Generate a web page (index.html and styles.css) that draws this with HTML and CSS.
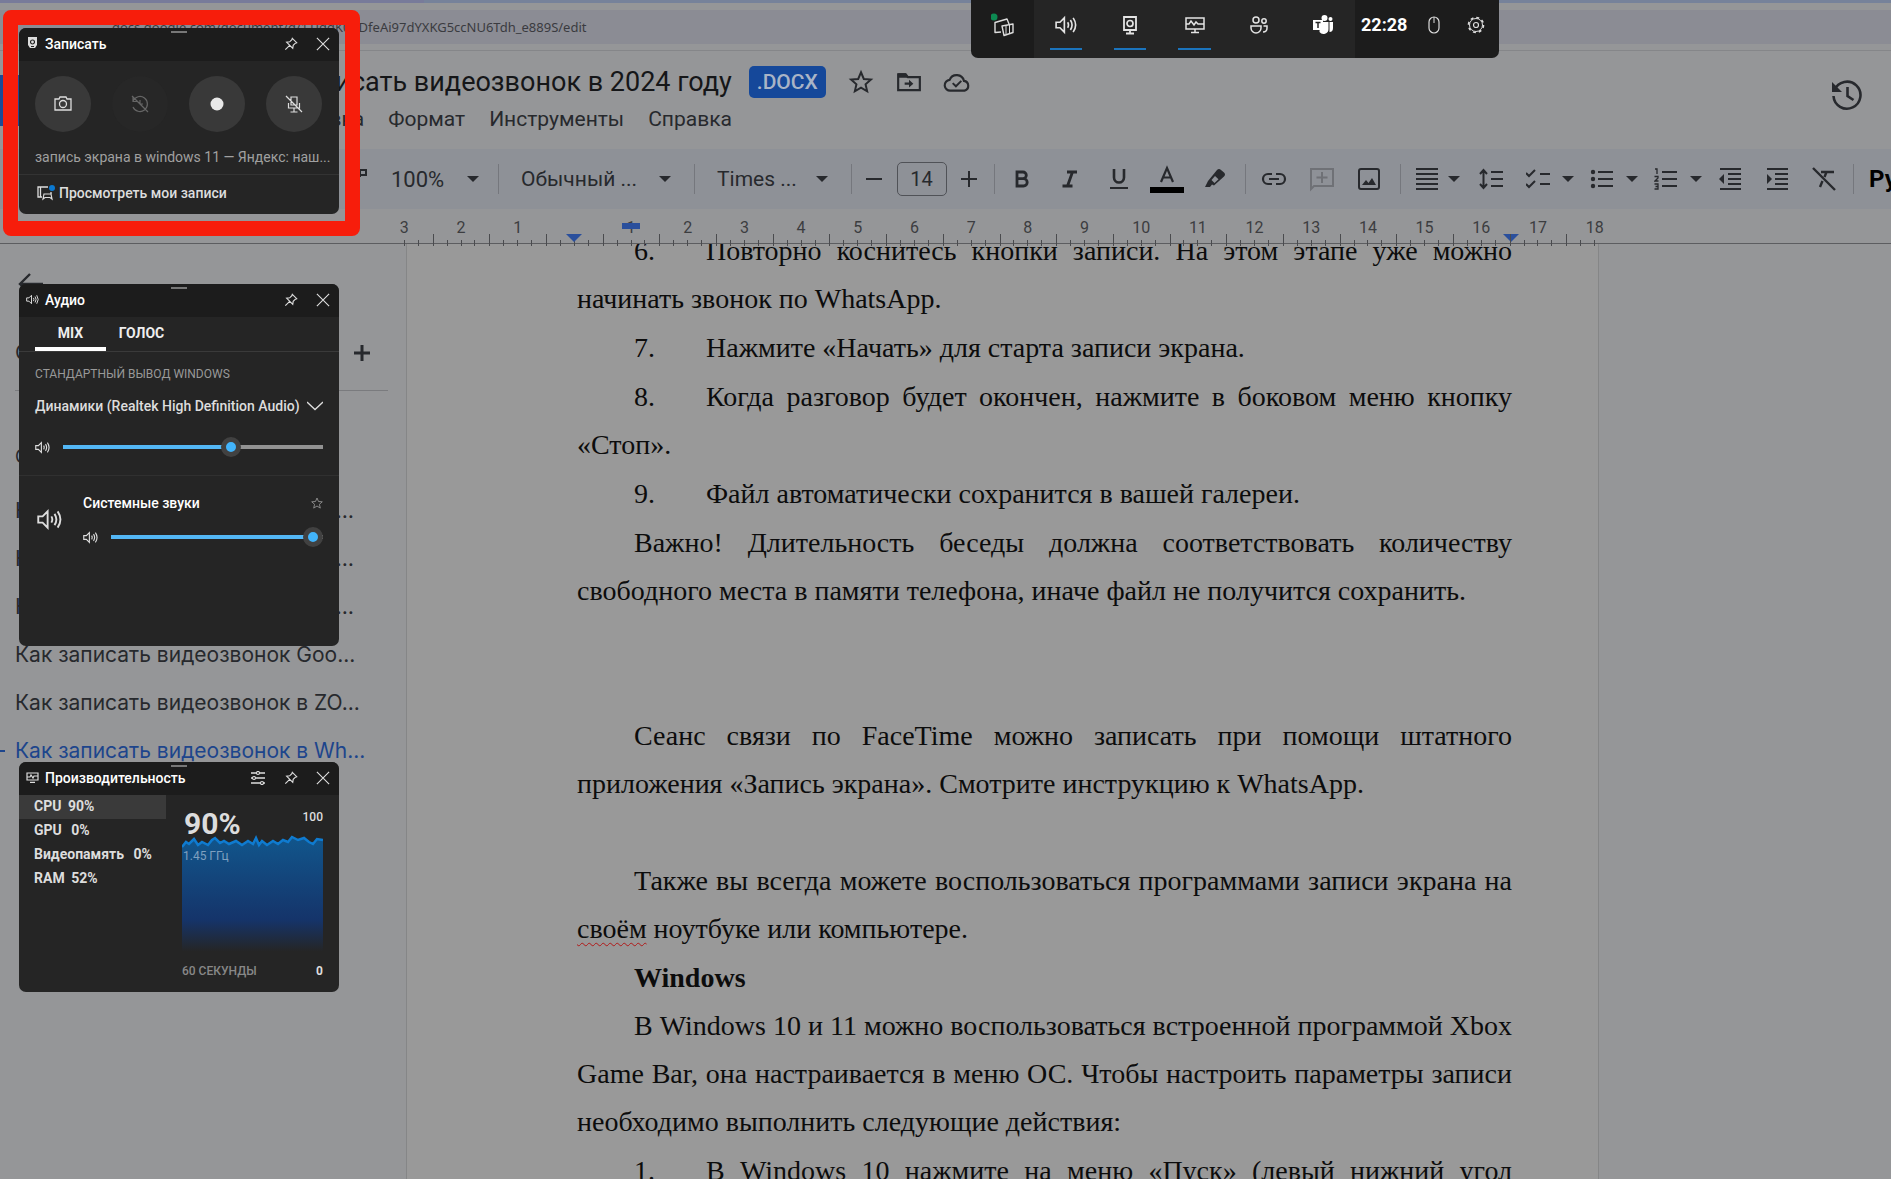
FILE: index.html
```html
<!DOCTYPE html>
<html lang="ru">
<head>
<meta charset="utf-8">
<title>Как записать видеозвонок в 2024 году</title>
<link rel="stylesheet" href="styles.css">
</head>
<body>
<svg class="defs" aria-hidden="true">
  <symbol id="speaker" viewBox="0 0 20 20"><path d="M1 7.500h3.500l4-4v13l-4-4H1zM11.500 7.500q1.500 2.500 0 5M14 5.500q3 4.500 0 9M16.500 3.500q4.500 6.500 0 13" fill="none" stroke="currentColor" stroke-width="1.500"/></symbol>
  <symbol id="pin" viewBox="0 0 16 16"><path d="M9.500 1.500l5 5-1.500.5-2.500 2.500-.5 3.500L3 6l3.500-.5L9 3zM6.500 9.500L1.500 14.500" fill="none" stroke="currentColor" stroke-width="1.300"/></symbol>
  <symbol id="close" viewBox="0 0 16 16"><path d="M1 1l14 14M15 1L1 15" stroke="currentColor" stroke-width="1.300"/></symbol>
</svg>

<header class="browser">
  <div class="tabs"><span class="tab"></span></div>
  <div class="address">docs.google.com/document/d/1TJggK0RDfeAi97dYXKG5ccNU6Tdh_e889S/edit</div>
</header>

<section class="head">
  <span class="logo"></span>
  <div class="head-main">
    <div class="title-row">
      <h1>Как записать видеозвонок в 2024 году</h1>
      <span class="badge">.DOCX</span>
      <button aria-label="Пометить"><svg width="26" height="26" viewBox="0 0 24 24"><path d="M12 3l2.600 6.200 6.600.5-5 4.400 1.500 6.500L12 17.200l-5.700 3.400 1.500-6.500-5-4.400 6.600-.5z" fill="none" stroke="currentColor" stroke-width="1.800"/></svg></button>
      <button aria-label="Переместить"><svg width="26" height="26" viewBox="0 0 24 24"><path d="M2 5h7l2 2.500h11v12H2z" fill="none" stroke="currentColor" stroke-width="2"/><path d="M2 4h7l2 4H2zM12 10l4 3.500-4 3.500v-2.500H8v-2h4z" fill="currentColor"/></svg></button>
      <button aria-label="Статус документа"><svg width="28" height="26" viewBox="0 0 26 24"><path d="M7 20a5 5 0 0 1-.8-10A7 7 0 0 1 19.500 11 4.600 4.600 0 0 1 20 20z" fill="none" stroke="currentColor" stroke-width="2"/><path d="M9 13l3 3 5-5" fill="none" stroke="currentColor" stroke-width="1.800"/></svg></button>
    </div>
    <nav class="menu"><a href="#">Вставка</a><a href="#">Формат</a><a href="#">Инструменты</a><a href="#">Справка</a></nav>
  </div>
  <button class="history" aria-label="История"><svg width="32" height="32" viewBox="0 0 32 32"><path d="M3.500 11A13.500 13.500 0 1 1 2.500 17M16.500 8v9l6 4" fill="none" stroke="currentColor" stroke-width="2.600"/><path d="M1 3v10h10l-3.500-3.500L4 6z" fill="currentColor"/></svg></button>
</section>

<div class="toolbar">
  <button class="paint" aria-label="Форматирование"><svg width="24" height="24" viewBox="0 0 24 24"><path d="M4 3h12v6H4zM16 3h6v5h-11v8" fill="none" stroke="currentColor" stroke-width="2"/></svg></button>
  <button class="drop zoom">100%<i class="caret"></i></button><i class="sep"></i>
  <button class="drop style">Обычный ...<i class="caret"></i></button><i class="sep"></i>
  <button class="drop font">Times ...<i class="caret"></i></button><i class="sep"></i>
  <div class="size">
    <button aria-label="Меньше"><svg width="18" height="18" viewBox="0 0 18 18"><path d="M1 9h16" stroke="currentColor" stroke-width="2"/></svg></button>
    <input value="14" aria-label="Размер шрифта">
    <button aria-label="Больше"><svg width="18" height="18" viewBox="0 0 18 18"><path d="M1 9h16M9 1v16" stroke="currentColor" stroke-width="2"/></svg></button>
  </div><i class="sep"></i>
  <div class="group text">
    <button aria-label="Полужирный"><svg width="24" height="24" viewBox="0 0 24 24"><path d="M7 5h6a3.300 3.300 0 0 1 0 6.600H7zM7 11.600h6.500a3.700 3.700 0 0 1 0 7.400H7z" fill="none" stroke="currentColor" stroke-width="2.800"/></svg></button>
    <button aria-label="Курсив"><svg width="24" height="24" viewBox="0 0 24 24"><path d="M9 5h10M4.500 19h10M14.500 5l-5 14" fill="none" stroke="currentColor" stroke-width="2.800"/></svg></button>
    <button aria-label="Подчеркнутый"><svg width="24" height="24" viewBox="0 0 24 24"><path d="M7 2v8.500a5 5 0 0 0 10 0V2" fill="none" stroke="currentColor" stroke-width="2.600"/><path d="M3 21h18" stroke="currentColor" stroke-width="2"/></svg></button>
    <button aria-label="Цвет текста"><svg width="34" height="28" viewBox="0 0 34 28"><path d="M11 17l6-14 6 14M13 12.500h8" fill="none" stroke="currentColor" stroke-width="2.200"/><path d="M0 22h34v6H0z" fill="#000"/></svg></button>
    <button class="marker" aria-label="Цвет выделения"><svg width="24" height="24" viewBox="0 0 24 24"><path d="M2 20l3-6 9-11q2-2 4 0l3 2.500q2 2 0 4l-10 9-2-1-2 2.500zM8.500 13l3 3 4-3.800-3.500-3.200z" fill="currentColor" fill-rule="evenodd"/></svg></button>
  </div><i class="sep"></i>
  <div class="group insert">
    <button aria-label="Ссылка"><svg width="26" height="24" viewBox="0 0 26 24"><path d="M11 7H7a5 5 0 0 0 0 10h4M15 7h4a5 5 0 0 1 0 10h-4M8 12h10" fill="none" stroke="currentColor" stroke-width="2.200"/></svg></button>
    <button class="off" aria-label="Комментарий"><svg width="26" height="26" viewBox="0 0 26 26"><path d="M2 23V3h22v17H5zM13 6v11M7.500 11.500h11" fill="none" stroke="currentColor" stroke-width="2"/></svg></button>
    <button aria-label="Изображение"><svg width="24" height="24" viewBox="0 0 24 24"><rect x="2" y="2" width="20" height="20" rx="2" fill="none" stroke="currentColor" stroke-width="2"/><path d="M5 18l4-5 2.500 3 3.500-5 4 7z" fill="currentColor"/></svg></button>
  </div><i class="sep"></i>
  <div class="group para">
    <button class="pair" aria-label="Выравнивание"><svg width="24" height="24" viewBox="0 0 24 24"><path d="M1 2h22M1 7h22M1 12h22M1 17h22M1 22h22" stroke="currentColor" stroke-width="2"/></svg><i class="caret"></i></button>
    <button class="lone" aria-label="Интервал"><svg width="24" height="24" viewBox="0 0 24 24"><path d="M12 5h12M12 12h12M12 19h12M4.500 4v16M1 7l3.500-4L8 7M1 17l3.500 4L8 17" fill="none" stroke="currentColor" stroke-width="2"/></svg></button>
    <button class="pair" aria-label="Контрольный список"><svg width="24" height="24" viewBox="0 0 24 24"><path d="M14 7h10M14 17h10M0 6l3 3 6-6M0 17l3 3 6-6" fill="none" stroke="currentColor" stroke-width="2"/></svg><i class="caret"></i></button>
    <button class="pair" aria-label="Маркированный список"><svg width="24" height="24" viewBox="0 0 24 24"><path d="M8 5h15M8 12h15M8 19h15" stroke="currentColor" stroke-width="2"/><g fill="currentColor"><circle cx="3" cy="5" r="2.200"/><circle cx="3" cy="12" r="2.200"/><circle cx="3" cy="19" r="2.200"/></g></svg><i class="caret"></i></button>
    <button class="pair" aria-label="Нумерованный список"><svg width="24" height="24" viewBox="0 0 24 24"><path d="M8 5h15M8 12h15M8 19h15" stroke="currentColor" stroke-width="2"/><path d="M1 2h2v5M.5 9.500h3.500v1.500l-3 3h3.500M.5 17H4v5H.5M1.500 19.500H4" fill="none" stroke="currentColor" stroke-width="1.300"/></svg><i class="caret"></i></button>
    <button class="lone" aria-label="Уменьшить отступ"><svg width="24" height="24" viewBox="0 0 24 24"><path d="M2 2h21M10 7h13M10 12h13M10 17h13M2 22h21" stroke="currentColor" stroke-width="2"/><path d="M6 7v10l-5-5z" fill="currentColor"/></svg></button>
    <button class="lone" aria-label="Увеличить отступ"><svg width="24" height="24" viewBox="0 0 24 24"><path d="M2 2h21M10 7h13M10 12h13M10 17h13M2 22h21" stroke="currentColor" stroke-width="2"/><path d="M2 7v10l5-5z" fill="currentColor"/></svg></button>
    <button aria-label="Очистить"><svg width="24" height="24" viewBox="0 0 24 24"><path d="M1 1l22 22M9 5h13M14.500 5l-2 5M10.500 14l-2.500 6" fill="none" stroke="currentColor" stroke-width="2.400"/></svg></button>
  </div><i class="sep"></i>
  <button class="lang">Ру</button>
</div>

<div class="ruler"><div class="scale">
  <span>3</span><span>2</span><span>1</span><span class="mark"></span><span class="first">1</span><span>2</span><span>3</span><span>4</span><span>5</span><span>6</span><span>7</span><span>8</span><span>9</span><span>10</span><span>11</span><span>12</span><span>13</span><span>14</span><span>15</span><span class="end">16</span><span>17</span><span>18</span>
</div></div>

<main class="work">
  <aside class="outline">
    <button class="back" aria-label="Назад"><svg width="26" height="24" viewBox="0 0 26 24"><path d="M26 12H3M13 2L3 12l10 10" fill="none" stroke="currentColor" stroke-width="2.400"/></svg></button>
    <div class="summary"><span>Сводка</span><button aria-label="Добавить"><svg width="16" height="16" viewBox="0 0 16 16"><path d="M0 8h16M8 0v16" stroke="currentColor" stroke-width="3"/></svg></button></div>
    <h2>Структура</h2>
    <nav>
      <a class="clip" href="#">Как записать видеозвонок на телефоне и компьютере</a>
      <a class="clip" href="#">Как записать видеозвонок на телефоне и компьютере</a>
      <a class="clip" href="#">Как записать видеозвонок на телефоне и компьютере</a>
      <a href="#">Как записать видеозвонок Goo...</a>
      <a href="#">Как записать видеозвонок в ZO...</a>
      <a class="current" href="#">Как записать видеозвонок в Wh...</a>
    </nav>
  </aside>
  <article class="page">
    <p class="item"><b>6.</b>Повторно коснитесь кнопки записи. На этом этапе уже можно начинать звонок по WhatsApp.</p>
    <p class="item"><b>7.</b>Нажмите «Начать» для старта записи экрана.</p>
    <p class="item"><b>8.</b>Когда разговор будет окончен, нажмите в боковом меню кнопку «Стоп».</p>
    <p class="item"><b>9.</b>Файл автоматически сохранится в вашей галереи.</p>
    <p>Важно! Длительность беседы должна соответствовать количеству свободного места в памяти телефона, иначе файл не получится сохранить.</p>
    <p class="empty two"></p>
    <p>Сеанс связи по FaceTime можно записать при помощи штатного приложения «Запись экрана». Смотрите инструкцию к WhatsApp.</p>
    <p class="empty"></p>
    <p>Также вы всегда можете воспользоваться программами записи экрана на <u>своём</u> ноутбуке или компьютере.</p>
    <h3>Windows</h3>
    <p>В Windows 10 и 11 можно воспользоваться встроенной программой Xbox Game Bar, она настраивается в меню ОС. Чтобы настроить параметры записи необходимо выполнить следующие действия:</p>
    <p class="item"><b>1.</b>В Windows 10 нажмите на меню «Пуск» (левый нижний угол экрана)</p>
  </article>
</main>

<div class="frame"></div>

<section class="widget capture">
  <header><svg width="13" height="13" viewBox="-1 0 13 13"><path d="M1 0h9v8l-2 3H3L1 8z" fill="#ddd"/><circle cx="5.500" cy="5" r="2" fill="none" stroke="#222" stroke-width="1.200"/><path d="M4 9.500h3" stroke="#222"/></svg><h2>Записать</h2>
    <button aria-label="Закрепить"><svg width="14" height="14"><use href="#pin"/></svg></button><button aria-label="Закрыть"><svg width="14" height="14"><use href="#close"/></svg></button></header>
  <div class="rounds">
    <button aria-label="Снимок"><svg width="18" height="16" viewBox="0 0 18 16"><path d="M1 3h4l1-2h6l1 2h4v11H1z" fill="none" stroke="currentColor" stroke-width="1.300"/><circle cx="9" cy="8" r="3.500" fill="none" stroke="currentColor" stroke-width="1.300"/></svg></button>
    <button class="off" disabled aria-label="Записать последнее"><svg width="18" height="18" viewBox="0 0 18 18"><path d="M2 6a7.500 7.500 0 1 1 0 6M2 2v4.500h4.500M9 5v4h3M1 1l16 16" fill="none" stroke="currentColor" stroke-width="1.200"/></svg></button>
    <button aria-label="Начать запись"><svg width="14" height="14"><circle cx="7" cy="7" r="6.500" fill="#e8e8e8"/></svg></button>
    <button aria-label="Микрофон"><svg width="18" height="18" viewBox="0 0 18 18"><path d="M6 2h6v8H6zM3.500 8v5h11V8M9 13v4M5.500 17h7M1 1l16 16" fill="none" stroke="currentColor" stroke-width="1.200"/></svg></button>
  </div>
  <p class="source">запись экрана в windows 11 — Яндекс: наш...</p>
  <a class="records" href="#"><svg width="18" height="16" viewBox="0 0 18 16"><path d="M11 2H1v10h4M14 7v2M3.500 2v10" fill="none" stroke="#ddd" stroke-width="1.300"/><path d="M6 14l1-5h7l1 5-2-1.500H8z" fill="none" stroke="#ddd" stroke-width="1.200"/><circle cx="15" cy="3" r="3" fill="#0a78d0"/></svg>Просмотреть мои записи</a>
</section>

<section class="widget audio">
  <header><svg width="13" height="13"><use href="#speaker"/></svg><h2>Аудио</h2>
    <button aria-label="Закрепить"><svg width="14" height="14"><use href="#pin"/></svg></button><button aria-label="Закрыть"><svg width="14" height="14"><use href="#close"/></svg></button></header>
  <div class="tabset"><button class="on">MIX</button><button>ГОЛОС</button></div>
  <div class="output">
    <p class="caption">СТАНДАРТНЫЙ ВЫВОД WINDOWS</p>
    <button class="device">Динамики (Realtek High Definition Audio)<svg width="16" height="10" viewBox="0 0 16 10"><path d="M0 1l8 7.500L16 1" fill="none" stroke="currentColor" stroke-width="1.300"/></svg></button>
    <div class="volume"><svg width="15" height="15"><use href="#speaker"/></svg><input type="range" value="66" aria-label="Громкость динамиков" style="--level:65%"></div>
  </div>
  <div class="system">
    <svg class="big" width="25" height="25"><use href="#speaker"/></svg>
    <div><div class="name"><span>Системные звуки</span><svg width="12" height="12" viewBox="0 0 12 12"><path d="M6 1l1.500 3.500 3.800.3-2.900 2.500.9 3.800L6 9l-3.300 2.100.9-3.800L.7 4.800l3.800-.3z" fill="none" stroke="#888"/></svg></div>
    <div class="volume"><svg width="15" height="15"><use href="#speaker"/></svg><input type="range" value="100" aria-label="Системные звуки" style="--level:95%"></div></div>
  </div>
</section>

<section class="widget perf">
  <header><svg width="13" height="11" viewBox="0 0 13 11"><path d="M1 1h11v7H1zM4 10.300h5M1 5h3l1-2 2 3 1-2h4" fill="none" stroke="#ddd" stroke-width="1.200"/></svg><h2>Производительность</h2>
    <button aria-label="Параметры"><svg width="16" height="14" viewBox="0 0 16 14"><path d="M1 2h14M1 7h14M1 12h14" stroke="currentColor" stroke-width="1.300"/><g fill="#1c1c1c" stroke="currentColor" stroke-width="1.200"><circle cx="8" cy="2" r="1.500"/><circle cx="4" cy="7" r="1.500"/><circle cx="12" cy="12" r="1.500"/></g></svg></button><button aria-label="Закрепить"><svg width="14" height="14"><use href="#pin"/></svg></button><button aria-label="Закрыть"><svg width="14" height="14"><use href="#close"/></svg></button></header>
  <div class="perf-body">
    <ul><li class="on">CPU <span>90%</span></li><li>GPU <span class="far">0%</span></li><li>Видеопамять <span class="far">0%</span></li><li>RAM <span>52%</span></li></ul>
    <div class="chart">
      <div class="top"><strong>90%</strong><span>100</span></div>
      <div class="plot"><svg viewBox="0 0 141 120" width="141" height="120"><defs><linearGradient id="g" x2="0" y2="1"><stop offset="0" stop-color="#11568c"/><stop offset=".7" stop-color="#15346a"/><stop offset=".97" stop-color="#252525"/></linearGradient></defs><path d="M0 12L4 7l3 2 5-5 4 6 4-3 6 3 4-5 3-2 5 5 4-2 5 3 7-3 6 4 6-4 5 3 3-6 3 7 3-4 5 4 6-4 5 3 5-4 5 2 4-5 6 3 6-2 5 4 4 2 4-5 6 1V120H0z" fill="url(#g)"/><path d="M0 12L4 7l3 2 5-5 4 6 4-3 6 3 4-5 3-2 5 5 4-2 5 3 7-3 6 4 6-4 5 3 3-6 3 7 3-4 5 4 6-4 5 3 5-4 5 2 4-5 6 3 6-2 5 4 4 2 4-5 6 1" fill="none" stroke="#0f7bd0" stroke-width="2.500"/></svg><span>1.45 ГГц</span></div>
      <div class="bottom"><span>60 СЕКУНДЫ</span><b>0</b></div>
    </div>
  </div>
</section>

<nav class="gamebar">
  <div class="side"><button aria-label="Xbox"><svg width="24" height="24" viewBox="0 0 24 24"><path d="M10 19l-6 .5V9.500L16 6l2 5M11 13l11-2v8.500l-9 3z" fill="none" stroke="#ddd" stroke-width="1.400" stroke-linejoin="round"/><path d="M15 12.500v9M18.500 12v9" stroke="#ddd"/><circle cx="3" cy="4" r="3.500" fill="#0d8a52"/></svg></button></div>
  <div class="mid">
    <button class="on" aria-label="Аудио"><svg width="22" height="22"><use href="#speaker"/></svg></button>
    <button class="on" aria-label="Запись"><svg width="18" height="20" viewBox="0 0 18 20"><path d="M3 2h12v13H3zM9 15v3M5 18.500h8" fill="none" stroke="currentColor" stroke-width="1.800"/><circle cx="9" cy="8.500" r="3" fill="none" stroke="currentColor" stroke-width="1.700"/></svg></button>
    <button class="on" aria-label="Производительность"><svg width="22" height="20" viewBox="0 0 22 20"><path d="M2 3h18v11H2zM11 14v3M7 17.500h8M2 9h3l2-3 3 4 2-3 2 2h6" fill="none" stroke="currentColor" stroke-width="1.500"/></svg></button>
    <button aria-label="Друзья"><svg width="20" height="20" viewBox="0 0 20 20"><g fill="none" stroke="currentColor" stroke-width="1.500"><circle cx="7" cy="5" r="3"/><circle cx="15" cy="6" r="2.200"/><path d="M2 11h10v2a5 5 0 0 1-10 0zM14.500 11H18v2q0 4-4 4"/></g></svg></button>
    <button aria-label="Teams"><svg width="22" height="22" viewBox="0 0 22 22"><g fill="#fff"><circle cx="12.500" cy="4" r="3"/><circle cx="18.500" cy="5" r="2"/><path d="M8 8h8.500v7a5 5 0 0 1-9 3zM17.500 8H21v6q0 4-3.500 4zM1 6h10v10H1z"/></g><path d="M3.500 8.500h5M6 8.500v5.500" stroke="#252525" stroke-width="1.500"/></svg></button>
  </div>
  <div class="side last"><time>22:28</time><button class="mouse" aria-label="Мышь"><svg width="12" height="18" viewBox="0 0 12 18"><rect x="1" y="1" width="10" height="16" rx="5" fill="none" stroke="#ddd" stroke-width="1.200"/><path d="M6 1v6" stroke="#ddd"/></svg></button><button class="gear" aria-label="Параметры"><svg width="18" height="18" viewBox="0 0 18 18"><circle cx="9" cy="9" r="6.500" fill="none" stroke="#ddd"/><circle cx="9" cy="9" r="7.500" fill="none" stroke="#ddd" stroke-width="1.600" stroke-dasharray="3 2.900"/><circle cx="9" cy="9" r="2.500" fill="none" stroke="#ddd" stroke-width="1.200"/></svg></button></div>
</nav>
</body>
</html>
```
FILE: styles.css
```css
* { box-sizing: border-box; }
body { margin: 0; height: 100vh; overflow: hidden; display: flex; flex-direction: column; background: #959698; color: #27292d; font-family: Roboto, sans-serif; }
h1, h2, h3, p, ul { margin: 0; padding: 0; font-weight: 400; list-style: none; }
button { border: 0; padding: 0; margin: 0; background: none; color: inherit; font: inherit; display: flex; align-items: center; justify-content: center; }
a { color: inherit; text-decoration: none; }
svg { display: block; flex: none; }
.defs { position: absolute; width: 0; height: 0; }

.browser { flex: none; height: 51px; border-bottom: 1px solid #858689; }
.tabs { height: 3px; background: #76829a; display: flex; }
.tab { width: 424px; background: #787b9a; }
.address { margin-top: 7px; height: 34px; padding-left: 112px; background: #8b8c94; color: #3a3b40; font: 13px/34px "Noto Sans", sans-serif; }

.head { flex: none; height: 98px; display: flex; align-items: flex-start; padding-right: 28px; }
.logo { width: 19px; height: 51px; margin-top: 24px; background: #1b4a96; }
.head-main { flex: 1; padding: 15px 0 0 219px; }
.title-row { display: flex; align-items: center; height: 32px; }
.title-row h1 { font-size: 27px; line-height: 32px; color: #151618; white-space: nowrap; }
.badge { margin: 0 20px 0 17px; height: 32px; width: 77px; border-radius: 5px; background: #15489a; color: #a9b4c6; font: 500 21px/32px Roboto, sans-serif; text-align: center; }
.title-row button { width: 30px; margin-right: 18px; }
.menu { display: flex; gap: 24px; padding: 7px 0 0 46px; font-size: 21px; line-height: 28px; }
.history { margin-top: 28px; }

.toolbar { flex: none; height: 60px; background: #8e9197; display: flex; align-items: center; padding-left: 344px; white-space: nowrap; overflow: hidden; }
.toolbar > * { flex: none; }
.sep { width: 1px; height: 30px; background: #75777d; }
.caret { flex: none; border: 6px solid transparent; border-top-color: #27292d; border-bottom: 0; }
.paint { width: 24px; margin-right: 23px; }
.drop { justify-content: space-between; font-size: 21px; }
.zoom { width: 88px; margin-right: 19px; font-size: 22px; }
.style { width: 150px; margin: 0 23px 0 22px; }
.font { width: 111px; margin: 0 23px 0 22px; }
.size { display: flex; width: 142px; justify-content: space-between; padding: 0 16px 0 13px; align-items: center; }
.size input { width: 50px; height: 34px; border: 1px solid #505257; border-radius: 5px; background: none; text-align: center; font: 20px Roboto, sans-serif; color: inherit; padding: 0; }
.group { display: flex; align-items: center; }
.text { width: 250px; justify-content: space-between; padding: 0 13px 0 10px; }
.text button { width: 34px; }
.insert { width: 154px; justify-content: space-between; padding: 0 19px 0 15px; }
.off { color: #6f7176; }
.para { width: 452px; gap: 16px; padding-left: 14px; }
.pair { gap: 12px; }
.pair:first-child { gap: 9px; margin-right: 3px; }
.lone { margin-right: 7px; }
.lang { margin-left: 15px; font-size: 24px; font-weight: 700; color: #000; }

.ruler { flex: none; height: 35px; padding: 0 268px 0 376px; border-bottom: 1px solid #5c5d60; }
.scale { height: 34px; display: grid; grid-template-columns: repeat(22, 1fr); }
.scale span { position: relative; text-align: center; font: 16px/37px Roboto, sans-serif; color: #3c3d40;
  background: linear-gradient(#4a4b4e, #4a4b4e) 0 100% / 1px 12px no-repeat, linear-gradient(#4a4b4e, #4a4b4e) 25% 100% / 1px 6px no-repeat, linear-gradient(#4a4b4e, #4a4b4e) 50% 100% / 1px 6px no-repeat, linear-gradient(#4a4b4e, #4a4b4e) 75% 100% / 1px 6px no-repeat; }
.scale span:first-child { background-size: 0 0, 0 0, 1px 6px, 1px 6px; }
.scale span:last-child { background-size: 1px 12px, 1px 6px, 1px 6px, 0 0; }
.mark::after, .end::after { content: ""; position: absolute; left: calc(50% - 8px); bottom: 4px; border: 8px solid transparent; border-top-color: #2a4f9c; border-bottom: 0; }
.end::after { left: calc(100% - 7px); }
.first::after { content: ""; position: absolute; left: calc(50% - 9px); top: 14px; width: 18px; height: 6px; background: #2a4f9c; }

.work { flex: 1; min-height: 0; display: flex; overflow: hidden; }
.outline { flex: none; width: 406px; padding: 28px 18px 0 15px; font: 21px/48px Inter, sans-serif; }
.back { height: 24px; padding-left: 2px; }
.summary { height: 95px; border-bottom: 1px solid #7a7b7e; display: flex; justify-content: space-between; align-items: center; padding: 19px 18px 0 0; }
.outline h2 { font-size: 18px; margin-top: 42px; line-height: 48px; margin-bottom: 6px; }
.outline nav a { display: block; white-space: nowrap; width: 346px; }
.outline nav .clip { overflow: hidden; text-overflow: ellipsis; }
.outline .current { color: #1d458c; position: relative; }
.current::before { content: ""; position: absolute; left: -15px; top: 23px; width: 5px; height: 2px; background: #1d458c; }
.page { flex: 1; max-width: 1193px; background: #999; border: solid #858687; border-width: 0 1px; padding: 0 86px 0 170px; font: 28px/48px "Liberation Serif", serif; color: #0c0c0c; text-align: justify; overflow: hidden; }
.page p { text-indent: 57px; margin-bottom: 1px; }
.page p:first-child { margin-top: -17px; }
.item b { display: inline-block; width: 72px; font-weight: 400; text-indent: 0; }
.page .empty { height: 48px; margin: 0; }
.page .two { height: 96px; }
.page h3 { font: 700 28px/48px "Liberation Serif", serif; text-indent: 57px; }
.page u { text-decoration: underline wavy #b01818 1px; text-underline-offset: 4px; }

.frame { position: absolute; left: 3px; top: 10px; width: 357px; height: 226px; border: 15px solid #f71d0b; border-radius: 8px; }

.widget { position: absolute; left: 19px; width: 320px; background: #252525; color: #ddd; border-radius: 7px; overflow: hidden; font: 500 14px/20px Roboto, sans-serif; }
.widget header { height: 33px; background: #1c1c1c; display: flex; align-items: center; padding: 0 9px 2px 7px; position: relative; }
.widget header::before { content: ""; position: absolute; left: 152px; top: 3px; width: 16px; height: 2px; background: #777; }
.widget h2 { flex: 1; font: 500 14px/20px Roboto, sans-serif; color: #fff; }
.widget header > svg { margin-right: 6px; }
.widget header button { margin-left: 18px; }
.capture { top: 28px; height: 186px; }
.rounds { display: flex; justify-content: space-between; padding: 15px 17px 0 16px; }
.rounds button { width: 56px; height: 56px; border-radius: 50%; background: #393939; }
.rounds .off { background: #272727; color: #666; }
.source { margin: 15px 8px 7px 16px; color: #a0a0a0; white-space: nowrap; font-weight: 400; }
.records { display: flex; gap: 4px; align-items: center; height: 36px; padding: 0 18px; border-top: 1px solid #333; }

.audio { top: 284px; height: 362px; }
.tabset { display: flex; height: 35px; padding-left: 16px; border-bottom: 1px solid #3a3a3a; font-weight: 700; color: #eee; }
.tabset button { width: 71px; padding-bottom: 2px; }
.tabset .on { border-bottom: 4px solid #fff; padding: 2px 0 0; }
.output { padding: 12px 16px 0; height: 124px; border-bottom: 1px solid #303030; }
.caption { font-weight: 400; font-size: 12px; color: #999; }
.device { width: 100%; justify-content: space-between; margin-top: 12px; white-space: nowrap; }
.volume { display: flex; align-items: center; gap: 13px; height: 20px; }
.output .volume { margin-top: 21px; }
.volume input { flex: 1; min-width: 0; margin: 0; height: 20px; appearance: none; background: linear-gradient(90deg, #53b7f5 var(--level), #929292 var(--level)) 0 8px / 100% 4px no-repeat; }
.volume input::-webkit-slider-thumb { appearance: none; width: 20px; height: 20px; border-radius: 50%; background: #42b4fb; border: 5px solid #414141; }
.system { display: flex; padding: 17px 16px; gap: 21px; }
.system > div { flex: 1; }
.big { margin: 14px 0 0 2px; }
.name { display: flex; justify-content: space-between; align-items: center; color: #fff; margin-bottom: 14px; }

.perf { top: 762px; height: 230px; }
.perf-body { display: flex; }
.perf ul { width: 147px; font-weight: 700; }
.perf li { height: 24px; line-height: 23px; padding-left: 15px; white-space: nowrap; }
.perf li.on { background: #3a3a3a; }
.perf li span { margin-left: 3px; }
.perf li .far { margin-left: 6px; }
.chart { flex: 1; padding: 12px 16px 0; }
.top { display: flex; justify-content: space-between; height: 28px; font-size: 12px; }
.top strong { font: 700 30px/34px Roboto, sans-serif; padding-left: 2px; }
.plot { position: relative; }
.plot span { position: absolute; left: 1px; top: 11px; font-size: 12px; color: #7fa0c0; font-weight: 400; }
.bottom { display: flex; justify-content: space-between; padding-top: 6px; font-size: 12px; color: #888; }
.bottom b { color: #ddd; }

.gamebar { position: absolute; left: 971px; top: 0; width: 528px; height: 58px; border-radius: 0 0 7px 7px; background: #1c1c1c; color: #e4e4e4; display: flex; overflow: hidden; }
.side { width: 63px; display: flex; align-items: center; justify-content: center; padding-bottom: 8px; }
.mid { width: 321px; background: #252525; display: flex; }
.mid button { flex: 1; padding-bottom: 8px; position: relative; }
.mid .on::after { content: ""; position: absolute; left: 16px; right: 16px; top: 48px; height: 2px; background: #1b74bd; }
.last { flex: 1; justify-content: flex-start; padding-left: 6px; }
.last time { font: 700 18px/20px Roboto, sans-serif; color: #fff; }
.mouse { margin-left: 21px; }
.gear { margin-left: 27px; }
```
